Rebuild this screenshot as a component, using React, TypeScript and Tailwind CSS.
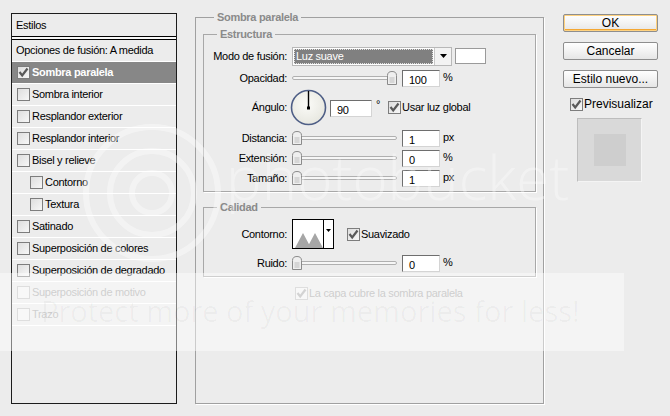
import React from 'react';

// Layer style dialog (Sombra paralela) — classic Windows look

type Row = { label: string; checked?: boolean; selected?: boolean; indent?: boolean; disabled?: boolean };

const rows: Row[] = [
  { label: 'Sombra paralela', checked: true, selected: true },
  { label: 'Sombra interior' },
  { label: 'Resplandor exterior' },
  { label: 'Resplandor interior' },
  { label: 'Bisel y relieve' },
  { label: 'Contorno', indent: true },
  { label: 'Textura', indent: true },
  { label: 'Satinado' },
  { label: 'Superposición de colores' },
  { label: 'Superposición de degradado' },
  { label: 'Superposición de motivo', disabled: true },
  { label: 'Trazo', disabled: true },
];

function Check({ checked, disabled }: { checked?: boolean; disabled?: boolean }) {
  return (
    <span
      className={`flex h-[13px] w-[13px] shrink-0 items-center justify-center border ${
        disabled ? 'border-[#c4c4c4] bg-[#f2f2f2]' : 'border-[#7d7d7d] bg-gradient-to-br from-[#dedede] to-[#f7f7f7]'
      }`}
    >
      {checked && (
        <svg width="11" height="11" viewBox="0 0 11 11">
          <path d="M1.5 5 L4.2 8.5 L9.5 1.5" fill="none" stroke={disabled ? '#b0b0b0' : '#5a5a5a'} strokeWidth="2.2" />
        </svg>
      )}
    </span>
  );
}

function Field({ value, w = 'w-[38px]' }: { value: string; w?: string }) {
  return (
    <div
      className={`${w} h-[17px] bg-white border border-t-[#6e6e6e] border-l-[#6e6e6e] border-r-[#d4d4d4] border-b-[#d4d4d4] pl-[6px] pt-[2px] text-[11px] leading-[14px] text-black`}
    >
      {value}
    </div>
  );
}

function Slider({ at }: { at: 'start' | 'end' }) {
  return (
    <div className="relative flex h-[16px] w-[105px] items-center">
      <div className="h-[4px] w-full rounded-full border border-[#b0b0b0] bg-[#f6f6f6]" />
      <svg
        width="10"
        height="14"
        viewBox="0 0 10 14"
        className={`absolute top-[1px] ${at === 'start' ? 'left-0' : 'right-0'}`}
      >
        <path d="M0.5 4.5 Q0.5 0.5 5 0.5 Q9.5 0.5 9.5 4.5 V13.5 H0.5 Z" fill="#efefef" stroke="#8a8a8a" />
        <rect x="2.5" y="6" width="5" height="6" fill="#d6d6d6" />
      </svg>
    </div>
  );
}

function Label({ children }: { children: React.ReactNode }) {
  return <span className="w-[83px] shrink-0 text-right">{children}</span>;
}

export default function App() {
  return (
    <div className="relative h-[416px] w-[670px] overflow-hidden bg-[#ececec] font-['Liberation_Sans',Arial,sans-serif] text-[11px] tracking-[-0.3px] text-black">
      <div className="flex pl-[11px] pt-[10px]">
        {/* Styles list */}
        <div className="mt-[3px] flex h-[391px] w-[166px] flex-col border border-[#1c1c1c]">
          <div className="flex h-[22px] items-center pl-[4px]">Estilos</div>
          <div className="h-px bg-black" />
          <div className="h-[2px] bg-[#f7f7f7]" />
          <div className="h-px bg-black" />
          <div className="flex h-[22px] items-center border-b border-white pl-[4px]">Opciones de fusión: A medida</div>
          {rows.map((r) => (
            <div
              key={r.label}
              className={`flex h-[22px] items-center border-b border-white ${r.indent ? 'pl-[18px]' : 'pl-[5px]'} ${
                r.selected ? 'bg-[#878787] font-bold text-white' : ''
              } ${r.disabled ? 'text-[#a8a8a8]' : ''}`}
            >
              <Check checked={r.checked} disabled={r.disabled} />
              <span className="ml-[2px]">{r.label}</span>
            </div>
          ))}
        </div>

        {/* Main group */}
        <fieldset className="ml-[18px] h-[394px] w-[349px] border border-[#a0a0a0] px-[7px] shadow-[1px_1px_0_#fff]">
          <legend className="ml-[11px] px-[3px] text-[11px] font-bold leading-[14px] text-[#8a8a8a]">Sombra paralela</legend>

          <fieldset className="mt-[3px] border border-[#a8a8a8] pb-[4px] pt-[6px] shadow-[1px_1px_0_#fff]">
            <legend className="ml-[13px] px-[3px] font-bold leading-[14px] text-[#8a8a8a]">Estructura</legend>

            <div className="flex h-[18px] items-center">
              <Label>Modo de fusión:</Label>
              <div className="ml-[5px] flex h-[19px] w-[160px] items-stretch border border-[#b8b8b8] bg-white">
                <div className="m-[1px] flex flex-1 items-center border border-dotted border-[#e0e0e0] bg-[#808080] pl-[1px] text-white">
                  Luz suave
                </div>
                <div className="flex w-[17px] items-center justify-center border-l border-[#c8c8c8] bg-[#f3f3f3]">
                  <svg width="7" height="4" viewBox="0 0 7 4">
                    <path d="M0 0 H7 L3.5 4 Z" fill="#000" />
                  </svg>
                </div>
              </div>
              <div className="ml-[3px] h-[16px] w-[31px] border border-[#9a9a9a] bg-white" />
            </div>

            <div className="mt-[4px] flex h-[18px] items-center">
              <Label>Opacidad:</Label>
              <div className="ml-[5px]">
                <Slider at="end" />
              </div>
              <div className="ml-[5px]">
                <Field value="100" />
              </div>
              <span className="ml-[3px] self-start">%</span>
            </div>

            <div className="mt-[2px] flex h-[36px] items-center">
              <Label>Ángulo:</Label>
              <svg width="37" height="37" viewBox="0 0 37 37" className="ml-[3px]">
                <defs>
                  <radialGradient id="dial" cx="0.45" cy="0.4" r="0.7">
                    <stop offset="0" stopColor="#fbfbf8" />
                    <stop offset="1" stopColor="#e4e4dc" />
                  </radialGradient>
                </defs>
                <circle cx="18.5" cy="18.5" r="17" fill="url(#dial)" stroke="#4e5e86" strokeWidth="1.6" />
                <line x1="18.5" y1="19" x2="18.5" y2="2" stroke="#000" strokeWidth="1.4" />
                <rect x="17" y="17.5" width="3" height="3" fill="#000" />
              </svg>
              <div className="ml-[3px] mt-[3px]">
                <Field value="90" w="w-[42px]" />
              </div>
              <span className="ml-[4px] mt-[-6px]">°</span>
              <div className="ml-[8px] flex items-center">
                <Check checked />
                <span className="ml-px">Usar luz global</span>
              </div>
            </div>

            {[
              ['Distancia:', '1', 'px'],
              ['Extensión:', '0', '%'],
              ['Tamaño:', '1', 'px'],
            ].map(([l, v, u], i) => (
              <div key={l} className={`${i === 0 ? 'mt-[4px]' : 'mt-[2px]'} flex h-[18px] items-center`}>
                <Label>{l}</Label>
                <div className="ml-[5px]">
                  <Slider at="start" />
                </div>
                <div className="ml-[5px]">
                  <Field value={v} />
                </div>
                <span className="ml-[3px] self-start">{u}</span>
              </div>
            ))}
          </fieldset>

          <fieldset className="mt-[8px] border border-[#a8a8a8] pb-[4px] pt-[5px] shadow-[1px_1px_0_#fff]">
            <legend className="ml-[13px] px-[3px] font-bold leading-[14px] text-[#8a8a8a]">Calidad</legend>
            <div className="flex h-[30px] items-center">
              <Label>Contorno:</Label>
              <div className="ml-[5px] flex h-[30px] w-[42px] border border-black bg-white">
                <svg width="30" height="28" viewBox="0 0 30 28" className="self-end">
                  <path d="M2 28 L10 13 L18 28 Z M14 28 L22 13 L30 28 Z" fill="#a6a6a6" />
                </svg>
                <div className="flex flex-1 items-start justify-center border-l border-black pt-[9px]">
                  <svg width="5" height="3" viewBox="0 0 5 3">
                    <path d="M0 0 H5 L2.5 3 Z" fill="#000" />
                  </svg>
                </div>
              </div>
              <div className="ml-[13px] flex items-center">
                <Check checked />
                <span className="ml-px">Suavizado</span>
              </div>
            </div>
            <div className="mt-[5px] flex h-[18px] items-center">
              <Label>Ruido:</Label>
              <div className="ml-[5px]">
                <Slider at="start" />
              </div>
              <div className="ml-[5px]">
                <Field value="0" />
              </div>
              <span className="ml-[3px] self-start">%</span>
            </div>
          </fieldset>

          <div className="mt-[8px] flex h-[16px] items-center pl-[92px] text-[#a6a6a6]">
            <Check checked disabled />
            <span className="ml-px">La capa cubre la sombra paralela</span>
          </div>
        </fieldset>

        {/* Buttons */}
        <div className="ml-[19px] mt-[4px] flex w-[95px] flex-col text-[12px] tracking-normal">
          <button className="h-[18px] rounded-[2px] border border-[#8e8e8e] bg-gradient-to-b from-white to-[#e6e6e6] leading-[14px] shadow-[inset_0_0_0_1px_#ffd27f,inset_0_-1px_0_1px_#f4a733]">
            OK
          </button>
          <button className="mt-[10px] h-[18px] rounded-[2px] border border-[#8e8e8e] bg-gradient-to-b from-white to-[#e6e6e6] leading-[14px]">
            Cancelar
          </button>
          <button className="mt-[10px] h-[18px] rounded-[2px] border border-[#8e8e8e] bg-gradient-to-b from-white to-[#e6e6e6] leading-[14px]">
            Estilo nuevo...
          </button>
          <div className="ml-[7px] mt-[9px] flex h-[14px] items-center">
            <Check checked />
            <span className="ml-px">Previsualizar</span>
          </div>
          <div className="ml-[14px] mt-[7px] flex h-[64px] w-[65px] items-center justify-center border border-[#f4f4f4] border-l-[#bdbdbd] border-t-[#bdbdbd] bg-[#d9d9d9]">
            <div className="h-[32px] w-[32px] bg-[#cecece]" />
          </div>
        </div>
      </div>

      {/* photobucket watermark */}
      <svg width="160" height="160" viewBox="0 0 160 160" className="pointer-events-none absolute left-[72px] top-[113px] opacity-40">
        <circle cx="80" cy="80" r="20" fill="none" stroke="#fff" strokeWidth="6" />
        <circle cx="80" cy="80" r="42" fill="none" stroke="#fff" strokeWidth="6" />
        <circle cx="80" cy="80" r="66" fill="none" stroke="#fff" strokeWidth="6" />
      </svg>
      <div className="pointer-events-none absolute left-[226px] top-[137px] font-['Open_Sans',sans-serif] text-[60px] font-light leading-[80px] tracking-normal text-white/35">
        photobucket
      </div>
      <div className="pointer-events-none absolute left-0 top-[273px] h-[78px] w-[624px] bg-white/45">
        <div className="ml-[41px] mt-[20px] font-['Open_Sans',sans-serif] text-[29px] leading-[36px] tracking-normal text-black/[0.035]">
          Protect more of your memories for less!
        </div>
      </div>
    </div>
  );
}
